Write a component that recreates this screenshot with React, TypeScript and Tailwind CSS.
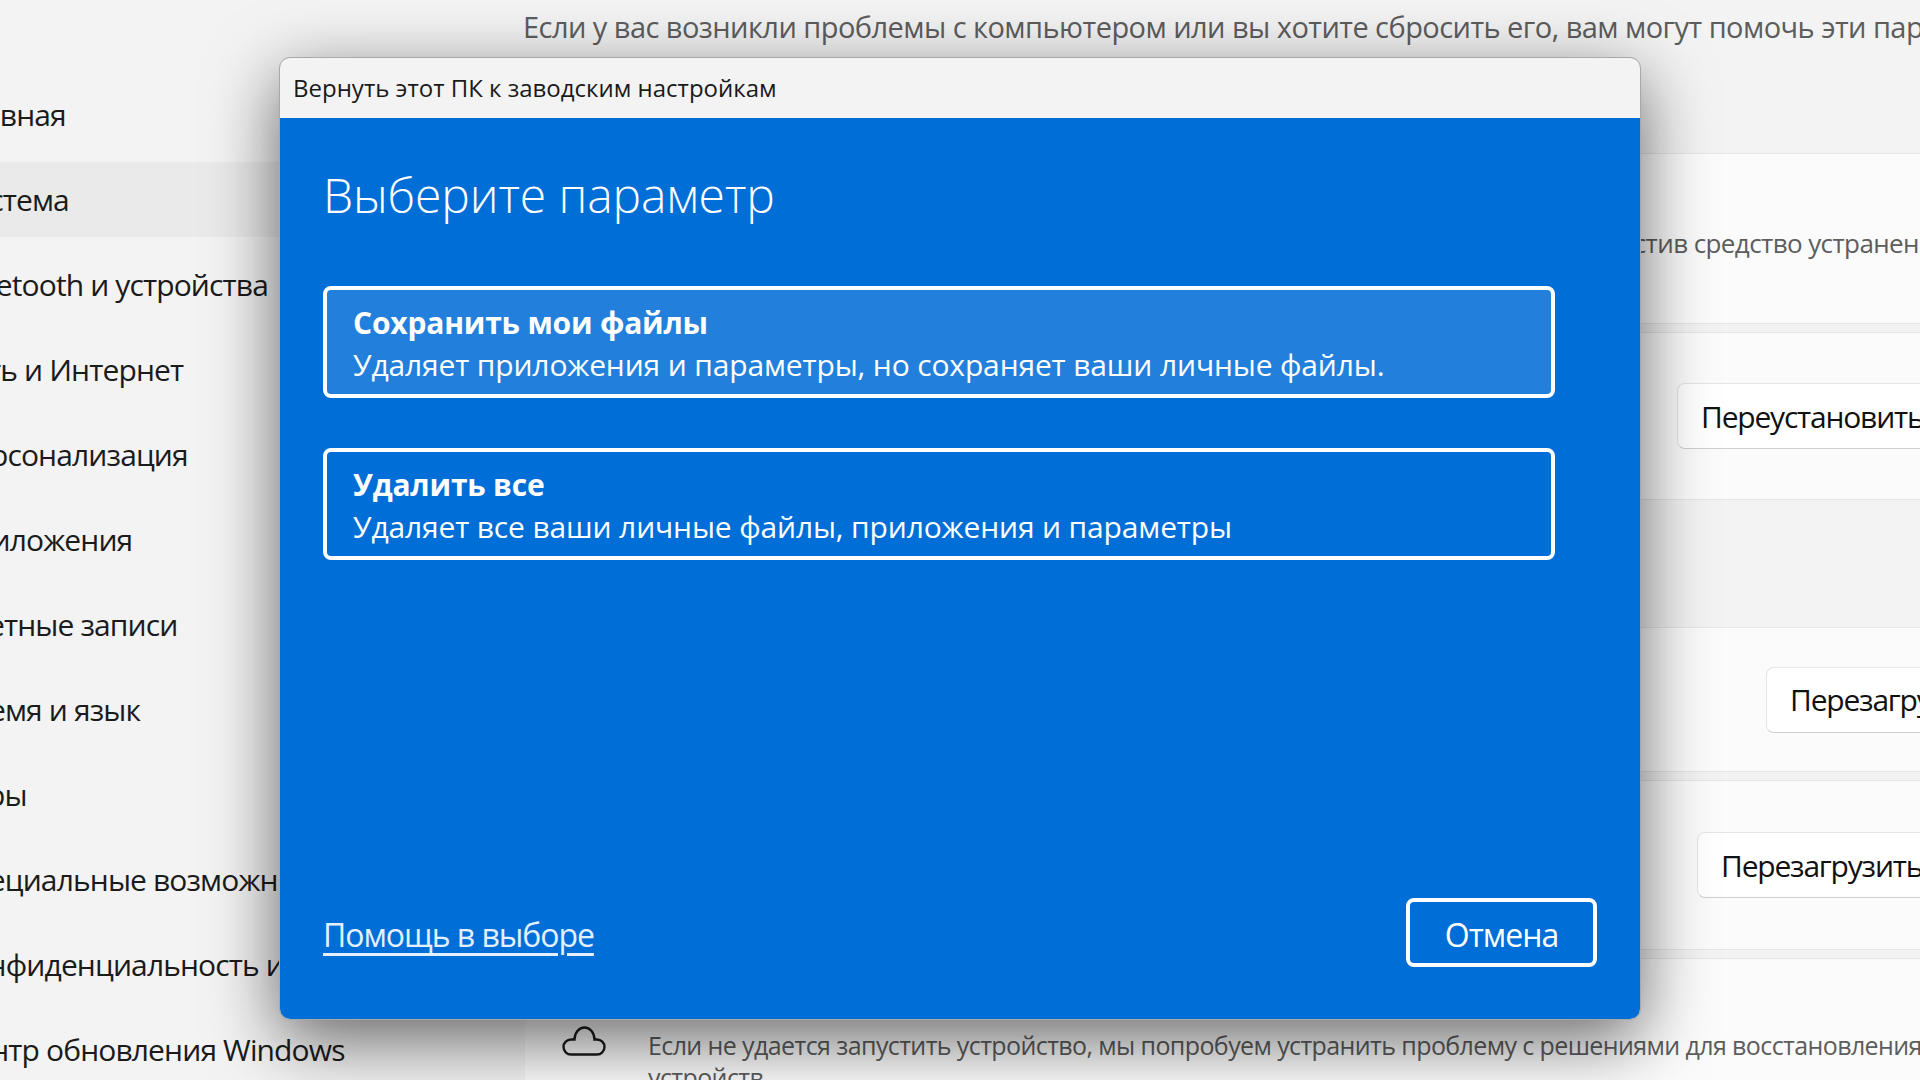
const NAV = [
  "Главная",
  "Система",
  "Bluetooth и устройства",
  "Сеть и Интернет",
  "Персонализация",
  "Приложения",
  "Учетные записи",
  "Время и язык",
  "Игры",
  "Специальные возможности",
  "Конфиденциальность и защита",
  "Центр обновления Windows",
];

function Row({ className, children }: { className: string; children?: React.ReactNode }) {
  return (
    <div className={`flex items-center justify-end bg-[#fbfbfb] border-y border-[#e6e6e6] ${className}`}>
      {children}
    </div>
  );
}

function PageButton({ label, className }: { label: string; className: string }) {
  return (
    <button className={`shrink-0 h-[66px] bg-white border border-[#e5e5e5] border-b-[#cfcfcf] rounded-lg text-left text-[30px] text-[#111] tracking-[-1.2px] whitespace-nowrap overflow-hidden ${className}`}>
      {label}
    </button>
  );
}

function Option({ title, text, active }: { title: string; text: string; active?: boolean }) {
  return (
    <div className={`h-[112px] border-[4px] border-white rounded-lg pl-[26px] pt-[12px] ${active ? "bg-[#2280dc]" : ""}`}>
      <p className="text-[30px] leading-[42px] font-bold tracking-[-0.2px]">{title}</p>
      <p className="text-[30px] leading-[42px] tracking-[-0.15px] whitespace-nowrap">{text}</p>
    </div>
  );
}

export default function App() {
  return (
    <div className="relative w-[1920px] h-[1080px] overflow-hidden bg-[#f3f3f3] flex font-['Open_Sans','Noto_Sans',sans-serif]">
      {/* Sidebar, labels run off the left edge of the picture */}
      <nav className="w-[525px] shrink-0 pt-[72px] overflow-hidden">
        {NAV.map((item, i) => (
          <div key={item} className="h-[85px] flex items-center text-[30px] text-[#1b1b1b] tracking-[-0.87px] whitespace-nowrap">
            <div className={i === 1 ? "w-full h-[75px] bg-[#eaeaea] flex items-center" : "flex items-center"}>
              <span className="-ml-[47px]">{item}</span>
            </div>
          </div>
        ))}
      </nav>

      {/* Settings page behind the dialog */}
      <main className="flex-1 min-w-0 overflow-hidden">
        <p className="h-[56px] flex items-center whitespace-nowrap text-[29px] text-[#5d5d5d] tracking-[-0.55px] -mt-px -ml-[2px]">
          Если у вас возникли проблемы с компьютером или вы хотите сбросить его, вам могут помочь эти параметры восстановления.
        </p>
        <div className="pt-[98px] flex flex-col gap-[8px]">
          <Row className="h-[171px] relative">
            <p className="absolute left-[1055px] top-[70px] whitespace-nowrap text-[26px] text-[#5d5d5d] tracking-[-0.6px]">
              запустив средство устранения неполадок
            </p>
          </Row>
          <Row className="h-[168px]">
            <PageButton label="Переустановить" className="w-[300px] pl-[23px] mr-[-57px]" />
          </Row>
          <div className="h-[111px]" />
          <Row className="h-[145px]">
            <PageButton label="Перезагрузить" className="w-[200px] pl-[23px] mr-[-46px]" />
          </Row>
          <Row className="h-[170px]">
            <PageButton label="Перезагрузить" className="w-[280px] pl-[23px] mr-[-57px]" />
          </Row>
          <div className="h-[140px] bg-[#fbfbfb] border-t border-[#e6e6e6] flex">
            <svg width="45" height="30" viewBox="0 0 45 30" className="mt-[67px] ml-[37px] shrink-0 text-[#1b1b1b]" fill="none" stroke="currentColor" strokeWidth="2.4">
              <path d="M9 28.500H35a7.500 7.500 0 0 0 0-15h-2.500a10 12 0 0 0-20 0H9a7.500 7.500 0 0 0 0 15Z" />
            </svg>
            <div className="ml-[41px] pt-[47px] whitespace-nowrap text-[25px] tracking-[-0.6px] text-[#5d5d5d] leading-[32px]">
              <p className="text-[29px] text-[#1b1b1b] -mt-[30px] leading-[40px]">Настройка из облака</p>
              <p className="mt-[13px]">Если не удается запустить устройство, мы попробуем устранить проблему с решениями для восстановления</p>
              <p>устройств</p>
            </div>
          </div>
        </div>
      </main>

      {/* Reset dialog */}
      <div className="absolute left-[280px] top-[58px] w-[1360px] h-[961px] rounded-[10px] overflow-hidden flex flex-col outline outline-1 outline-[#a9a9a9] shadow-[0_20px_70px_rgba(0,0,0,0.6)]">
        <div className="h-[60px] shrink-0 bg-[#f3f3f3] flex items-center pl-[13px] text-[24px] text-[#1a1a1a]">
          Вернуть этот ПК к заводским настройкам
        </div>
        <div className="flex-1 bg-[#006ed7] text-white flex flex-col pl-[43px] pr-[43px] pb-[52px]">
          <h1 className="mt-[42px] h-[70px] text-[48px] leading-[70px] font-light tracking-[-0.1px]">Выберите параметр</h1>
          <div className="mt-[56px] w-[1232px] flex flex-col gap-[50px]">
            <Option active title="Сохранить мои файлы" text="Удаляет приложения и параметры, но сохраняет ваши личные файлы." />
            <Option title="Удалить все" text="Удаляет все ваши личные файлы, приложения и параметры" />
          </div>
          <div className="mt-auto flex items-center justify-between">
            <a className="text-[32px] pt-[4px] underline underline-offset-[6px] text-[#e3f0ff] tracking-[-1.05px]">Помощь в выборе</a>
            <button className="w-[191px] h-[69px] border-[4px] border-white rounded-lg pt-[4px] text-[32px] tracking-[-1px]">Отмена</button>
          </div>
        </div>
      </div>
    </div>
  );
}
